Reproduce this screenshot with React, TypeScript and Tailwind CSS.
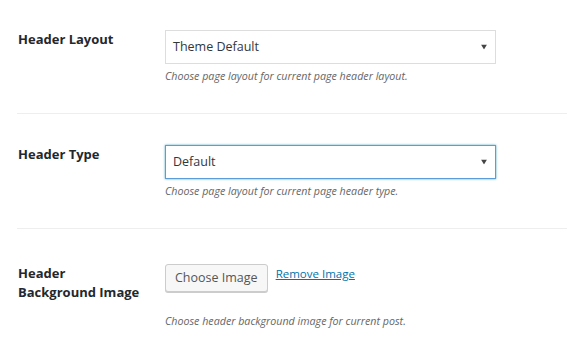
import React from 'react';

const font = { fontFamily: '"Open Sans", "Noto Sans", sans-serif' };

const Caret = () => (
  <svg width="6" height="5" viewBox="0 0 6 5" className="absolute right-[8px] top-1/2 -translate-y-1/2">
    <path d="M0 0 H6 L3 5 Z" fill="#444" />
  </svg>
);

const Row = ({ label, top, last, children }: { label: React.ReactNode; top: string; last?: boolean; children: React.ReactNode }) => (
  <div className={`flex ${last ? '' : 'border-b border-[#eeeeee]'} ${top}`}>
    <div className="w-[148px] shrink-0 pl-px text-[13px] font-bold leading-[19px] text-[#23282d]">{label}</div>
    <div className="flex-1">{children}</div>
  </div>
);

const Select = ({ value, focused }: { value: string; focused?: boolean }) => (
  <div
    className={`relative w-[331px] h-[34px] flex items-center pl-[7px] text-[12.5px] text-[#32373c] bg-white border ${
      focused ? 'border-[#5b9dd9] shadow-[0_0_2px_rgba(30,140,190,0.8)]' : 'border-[#dddddd]'
    }`}
  >
    {value}
    <Caret />
  </div>
);

const Desc = ({ children }: { children: React.ReactNode }) => (
  <p className="text-[10.7px] italic text-[#666666] leading-[14px]">{children}</p>
);

export default function App() {
  return (
    <div className="min-h-screen bg-white pl-[17px]" style={font}>
      <Row label="Header Layout" top="pt-[30px] h-[114px]">
        <Select value="Theme Default" />
        <div className="mt-[5px]">
          <Desc>Choose page layout for current page header layout.</Desc>
        </div>
      </Row>
      <Row label="Header Type" top="pt-[31px] h-[115px]">
        <Select value="Default" focused />
        <div className="mt-[5px]">
          <Desc>Choose page layout for current page header type.</Desc>
        </div>
      </Row>
      <Row
        last
        label={
          <>
            Header
            <br />
            Background Image
          </>
        }
        top="pt-[35px]"
      >
        <div className="flex items-start gap-[8px]">
          <button className="h-[28px] px-[9px] rounded-[3px] border border-[#cccccc] bg-[#f7f7f7] shadow-[0_1px_0_#cccccc] text-[12.5px] text-[#555555] leading-[26px]">
            Choose Image
          </button>
          <a href="#" className="text-[11.5px] text-[#0073aa] underline leading-[18px] mt-px">
            Remove Image
          </a>
        </div>
        <div className="mt-[22px]">
          <Desc>Choose header background image for current post.</Desc>
        </div>
      </Row>
    </div>
  );
}
